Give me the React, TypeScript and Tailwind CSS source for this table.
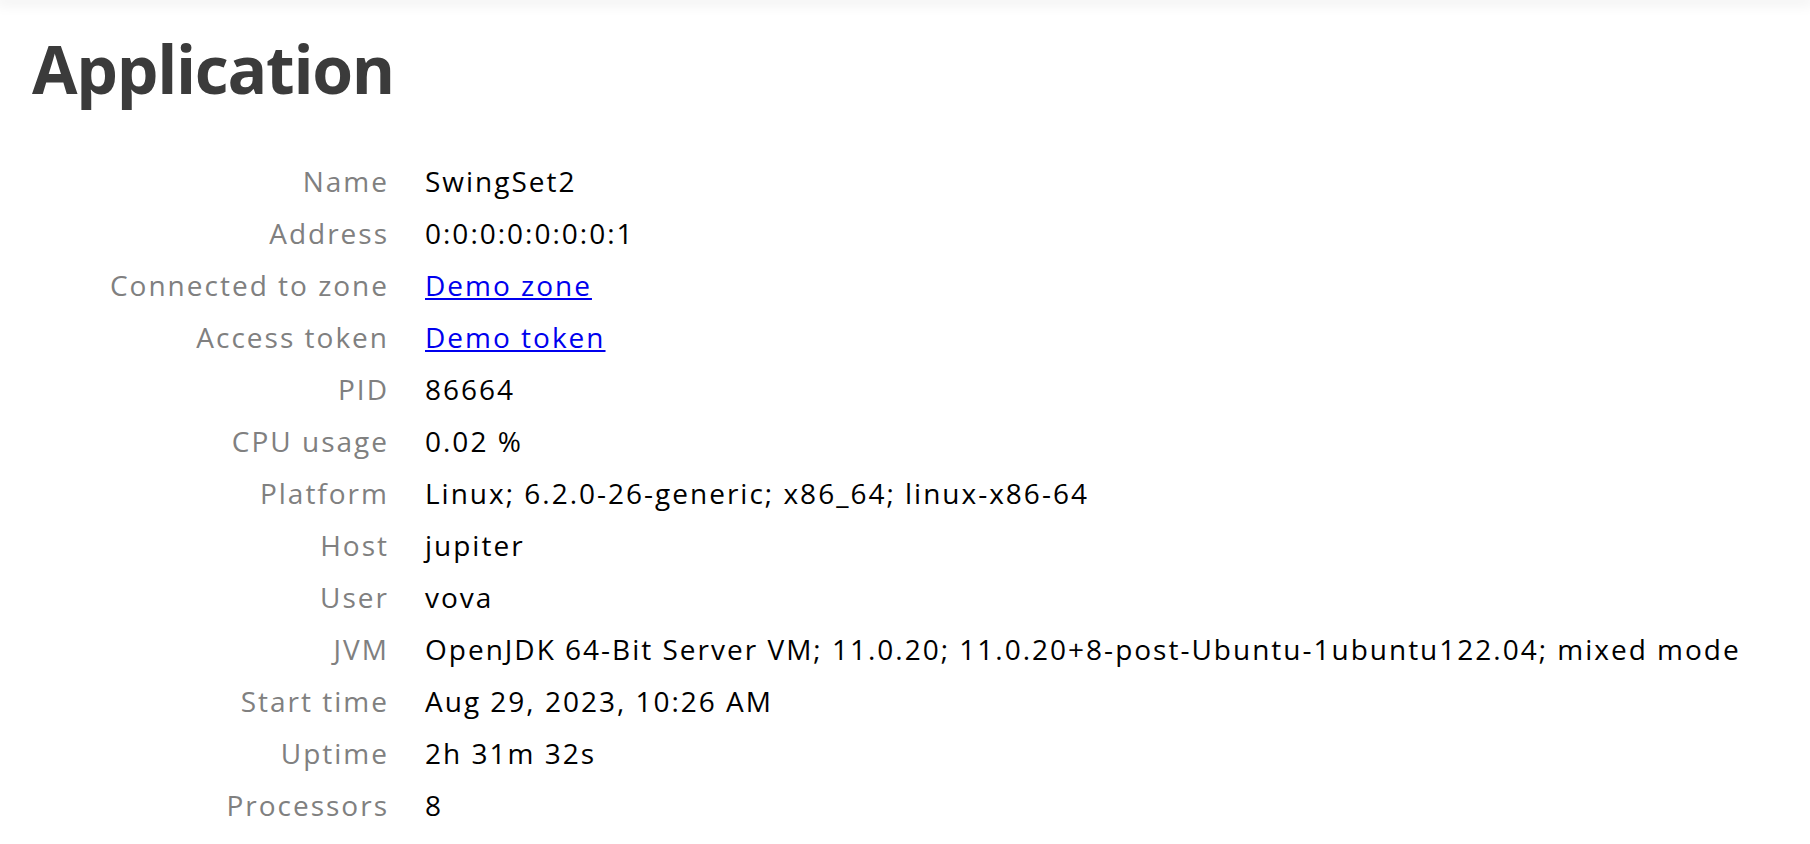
const rows: { label: string; value: string; link?: boolean }[] = [
  { label: 'Name', value: 'SwingSet2' },
  { label: 'Address', value: '0:0:0:0:0:0:0:1' },
  { label: 'Connected to zone', value: 'Demo zone', link: true },
  { label: 'Access token', value: 'Demo token', link: true },
  { label: 'PID', value: '86664' },
  { label: 'CPU usage', value: '0.02 %' },
  { label: 'Platform', value: 'Linux; 6.2.0-26-generic; x86_64; linux-x86-64' },
  { label: 'Host', value: 'jupiter' },
  { label: 'User', value: 'vova' },
  { label: 'JVM', value: 'OpenJDK 64-Bit Server VM; 11.0.20; 11.0.20+8-post-Ubuntu-1ubuntu122.04; mixed mode' },
  { label: 'Start time', value: 'Aug 29, 2023, 10:26 AM' },
  { label: 'Uptime', value: '2h 31m 32s' },
  { label: 'Processors', value: '8' },
]

export default function App() {
  return (
    <div className="min-h-[844px] bg-white font-['Open_Sans',sans-serif]">
      <div className="h-0 shadow-[0_0_14px_4px_rgba(0,0,0,0.08)]" />
      <div className="px-8 pt-[22px]">
        <h1 className="text-[66px] font-bold leading-[92px] tracking-[-1.3px] text-[#3b3b3b]">Application</h1>
        <div className="mt-[41px] grid grid-cols-[357px_1fr] gap-x-[36px] text-[28px] leading-[52px] tracking-[2px]">
          {rows.map((r) => (
            <div key={r.label} className="contents">
              <div className="text-right text-[#808080]">{r.label}</div>
              <div className="whitespace-nowrap text-black">
                {r.link ? (
                  <a href="#" className="text-[#0000ee] underline">
                    {r.value}
                  </a>
                ) : (
                  r.value
                )}
              </div>
            </div>
          ))}
        </div>
      </div>
    </div>
  )
}
